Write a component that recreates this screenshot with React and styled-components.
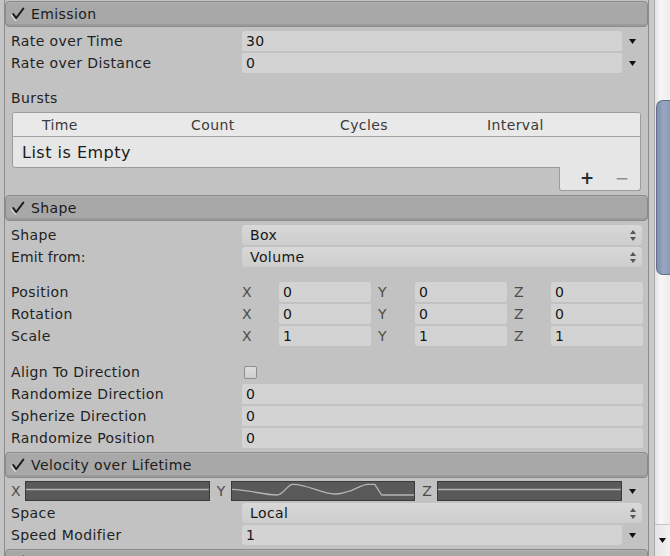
import React from "react";
import styled, { createGlobalStyle } from "styled-components";

const GlobalStyle = createGlobalStyle`
  html, body { margin: 0; padding: 0; height: 556px; overflow: hidden; background: #c3c3c3; }
  body {
    font-family: "DejaVu Sans", Verdana, sans-serif;
    font-size: 14px;
    letter-spacing: 0.4px;
    color: #1f1f1f;
  }
  * { box-sizing: border-box; }
`;

const Window = styled.div`
  display: flex;
  height: 556px;
  overflow: hidden;
  background: #c4c4c4;
`;

const LeftGutter = styled.div`
  width: 4px;
  flex: none;
`;

const Panel = styled.div`
  width: 645px;
  flex: none;
  border-left: 1px solid #8c8c8c;
  border-right: 1px solid #8c8c8c;
  background: #c2c2c2;
  display: flex;
  flex-direction: column;
  overflow: hidden;
`;

const Gutter = styled.div`
  width: 6px;
  flex: none;
  background: #c9c9c9;
  border-right: 1px solid #ababab;
`;

const Scrollbar = styled.div`
  flex: 1;
  display: flex;
  flex-direction: column;
  background: linear-gradient(90deg, #e0e0e0, #f6f6f6 35%, #ececec);
`;

const Thumb = styled.div`
  margin-top: 100px;
  margin-left: 1px;
  height: 175px;
  background: linear-gradient(90deg, #7e8fac, #97a7c1 50%, #8b9bb6);
  border: 1px solid #5f6f8d;
  border-right: none;
  border-radius: 7px 0 0 7px;
`;

const ScrollEnd = styled.div`
  margin-top: auto;
  height: 32px;
  display: flex;
  align-items: center;
  justify-content: center;
  border-top: 1px solid #c6c6c6;
  background: linear-gradient(90deg, #e4e4e4, #f2f2f2);
`;

const ModuleHeader = styled.div`
  flex: none;
  height: 26px;
  margin-top: ${(p) => p.$mt ?? 0}px;
  display: flex;
  align-items: center;
  gap: 6px;
  padding-left: 5px;
  background: #a8a8a8;
  border: 1px solid #8a8a8a;
  border-radius: 4px;
  box-shadow: inset 0 -2px 0 #9b9b9b, inset 0 1px 0 #b1b1b1;
  color: #1b1b1b;
  white-space: nowrap;
`;

const ModuleBody = styled.div`
  flex: none;
  display: flex;
  flex-direction: column;
  padding: ${(p) => p.$pt ?? 2}px 5px 0 6px;
`;

const Row = styled.div`
  display: grid;
  grid-template-columns: 231px 1fr;
  align-items: center;
  height: 22px;
`;

const Label = styled.span`
  white-space: nowrap;
  color: #222;
  letter-spacing: ${(p) => (p.$tight ? "0.1px" : "0.4px")};
`;

const Field = styled.div`
  height: 20px;
  background: #d3d3d3;
  border-radius: 2px;
  display: flex;
  align-items: center;
  padding-left: 4px;
  color: #161616;
  white-space: nowrap;
`;

const Popup = styled.div`
  height: 20px;
  margin-right: 1px;
  background: linear-gradient(#d8d8d8, #cdcdcd);
  border-radius: 3px;
  display: flex;
  align-items: center;
  justify-content: space-between;
  padding: 0 6px 0 8px;
  color: #161616;
`;

const WithArrow = styled.div`
  display: grid;
  grid-template-columns: 1fr 21px;
  align-items: center;
`;

const ArrowCell = styled.div`
  display: flex;
  align-items: center;
  justify-content: center;
`;

const Spacer = styled.div`
  height: ${(p) => p.$h}px;
  flex: none;
`;

const VectorFields = styled.div`
  display: grid;
  grid-template-columns: repeat(3, 1fr);
  column-gap: 7px;
`;

const Axis = styled.div`
  display: grid;
  grid-template-columns: 37px 1fr;
  align-items: center;
`;

const AxisLabel = styled.span`
  color: #4c4c4c;
  padding-left: ${(p) => p.$pl ?? 0}px;
`;

const Checkbox = styled.div`
  width: 13px;
  height: 13px;
  margin-left: 2px;
  border: 1px solid #8e8e8e;
  border-radius: 2px;
  background: linear-gradient(#dedede, #cfcfcf);
`;

const BurstTable = styled.div`
  margin: 3px 2px 0 1px;
  border: 1px solid #9c9c9c;
  border-radius: 3px 3px 0 3px;
  background: #e6e6e6;
  overflow: hidden;
`;

const TableHead = styled.div`
  display: grid;
  grid-template-columns: repeat(4, 149px);
  height: 24px;
  align-items: center;
  background: #e9e9e9;
  border-bottom: 1px solid #a3a3a3;
  color: #3a3a3a;
`;

const HeadCell = styled.span`
  padding-left: ${(p) => p.$pl ?? 29}px;
`;

const TableEmpty = styled.div`
  height: 30px;
  display: flex;
  align-items: center;
  padding-left: 9px;
  font-size: 16px;
  letter-spacing: 0.5px;
  color: #1a1a1a;
`;

const TableFooter = styled.div`
  align-self: flex-end;
  width: 82px;
  height: 24px;
  margin: -1px 2px 0 0;
  border: 1px solid #9c9c9c;
  border-top: none;
  border-radius: 0 0 3px 3px;
  background: #e6e6e6;
  display: flex;
  align-items: center;
  padding-left: 20px;
  gap: 20px;
`;

const FooterBtn = styled.span`
  font-size: 17px;
  font-weight: ${(p) => (p.$dim ? 400 : 700)};
  color: ${(p) => (p.$dim ? "#8e8e8e" : "#2a2a2a")};
  line-height: 1;
`;

const CurveRow = styled.div`
  display: grid;
  grid-template-columns: 14px 1fr 21px 1fr 22px 1fr 21px;
  align-items: center;
  height: 22px;
`;

const CurveBox = styled.div`
  height: 20px;
  background: #595959;
  border: 1px solid #3a3a3a;
  display: flex;
`;

const CurveSvg = styled.svg`
  width: 100%;
  height: 100%;
  display: block;
`;

const CheckIcon = () => (
  <svg width="14" height="14" viewBox="0 0 14 14">
    <path d="M1.5 7.5 L5 12 L12.5 1.5" fill="none" stroke="#e6e6e6" strokeWidth="2.4" strokeLinecap="round" strokeLinejoin="round" transform="translate(-0.6 0.6)" opacity="0.7" />
    <path d="M2.2 7.2 L5.2 11.2 L12.3 1.6" fill="none" stroke="#1e1e1e" strokeWidth="2.1" strokeLinecap="round" strokeLinejoin="round" />
  </svg>
);

const DropArrow = () => (
  <svg width="7" height="5" viewBox="0 0 7 5">
    <path d="M0 0 H7 L3.5 5 Z" fill="#111" />
  </svg>
);

const UpDown = () => (
  <svg width="6" height="11" viewBox="0 0 6 11">
    <path d="M0 4 L3 0 L6 4 Z" fill="#555" />
    <path d="M0 7 L6 7 L3 11 Z" fill="#555" />
  </svg>
);

const FlatCurve = () => (
  <CurveSvg viewBox="0 0 183 18" preserveAspectRatio="none">
    <line x1="0" y1="7.5" x2="183" y2="7.5" stroke="#b4b4b4" strokeWidth="1.3" />
  </CurveSvg>
);

const WaveCurve = () => (
  <CurveSvg viewBox="0 0 183 18" preserveAspectRatio="none">
    <path
      d="M0 7.3 C 18 8, 32 13, 45 13 C 52 13, 55 2.3, 61 2.3 C 76 2.3, 90 12, 103 12 C 108 12, 112 10.5, 116 9.7 C 124 7.5, 130 2.3, 136 2.3 L 143 2.3 L 150 13 L 183 13"
      fill="none"
      stroke="#b4b4b4"
      strokeWidth="1.3"
    />
  </CurveSvg>
);

const ValueRow = ({ label, value, arrow }) => (
  <Row>
    <Label>{label}</Label>
    {arrow ? (
      <WithArrow>
        <Field>{value}</Field>
        <ArrowCell>
          <DropArrow />
        </ArrowCell>
      </WithArrow>
    ) : (
      <Field>{value}</Field>
    )}
  </Row>
);

const PopupRow = ({ label, value, tight }) => (
  <Row>
    <Label $tight={tight}>{label}</Label>
    <Popup>
      <span>{value}</span>
      <UpDown />
    </Popup>
  </Row>
);

const VectorRow = ({ label, values }) => (
  <Row>
    <Label>{label}</Label>
    <VectorFields>
      {["X", "Y", "Z"].map((axis, i) => (
        <Axis key={axis}>
          <AxisLabel>{axis}</AxisLabel>
          <Field>{values[i]}</Field>
        </Axis>
      ))}
    </VectorFields>
  </Row>
);

const Header = ({ title, mt }) => (
  <ModuleHeader $mt={mt}>
    <CheckIcon />
    <span>{title}</span>
  </ModuleHeader>
);

export default function App() {
  return (
    <>
      <GlobalStyle />
      <Window>
        <LeftGutter />
        <Panel>
          <Header title="Emission" mt={1} />
          <ModuleBody $pt={3}>
            <ValueRow label="Rate over Time" value="30" arrow />
            <ValueRow label="Rate over Distance" value="0" arrow />
            <Spacer $h={13} />
            <Row>
              <Label>Bursts</Label>
            </Row>
            <BurstTable>
              <TableHead>
                <HeadCell>Time</HeadCell>
                <HeadCell>Count</HeadCell>
                <HeadCell>Cycles</HeadCell>
                <HeadCell $pl={27}>Interval</HeadCell>
              </TableHead>
              <TableEmpty>List is Empty</TableEmpty>
            </BurstTable>
            <TableFooter>
              <FooterBtn>+</FooterBtn>
              <FooterBtn $dim>−</FooterBtn>
            </TableFooter>
          </ModuleBody>

          <Header title="Shape" mt={4} />
          <ModuleBody $pt={3}>
            <PopupRow label="Shape" value="Box" />
            <PopupRow label="Emit from:" value="Volume" tight />
            <Spacer $h={13} />
            <VectorRow label="Position" values={["0", "0", "0"]} />
            <VectorRow label="Rotation" values={["0", "0", "0"]} />
            <VectorRow label="Scale" values={["1", "1", "1"]} />
            <Spacer $h={14} />
            <Row>
              <Label>Align To Direction</Label>
              <Checkbox />
            </Row>
            <ValueRow label="Randomize Direction" value="0" />
            <ValueRow label="Spherize Direction" value="0" />
            <ValueRow label="Randomize Position" value="0" />
          </ModuleBody>

          <Header title="Velocity over Lifetime" mt={3} />
          <ModuleBody $pt={2}>
            <CurveRow>
              <AxisLabel>X</AxisLabel>
              <CurveBox>
                <FlatCurve />
              </CurveBox>
              <AxisLabel $pl={7}>Y</AxisLabel>
              <CurveBox>
                <WaveCurve />
              </CurveBox>
              <AxisLabel $pl={7}>Z</AxisLabel>
              <CurveBox>
                <FlatCurve />
              </CurveBox>
              <ArrowCell>
                <DropArrow />
              </ArrowCell>
            </CurveRow>
            <PopupRow label="Space" value="Local" />
            <ValueRow label="Speed Modifier" value="1" arrow />
          </ModuleBody>

          <Header title="Limit Velocity over Lifetime" mt={3} />
        </Panel>
        <Gutter />
        <Scrollbar>
          <Thumb />
          <ScrollEnd>
            <DropArrow />
          </ScrollEnd>
        </Scrollbar>
      </Window>
    </>
  );
}
